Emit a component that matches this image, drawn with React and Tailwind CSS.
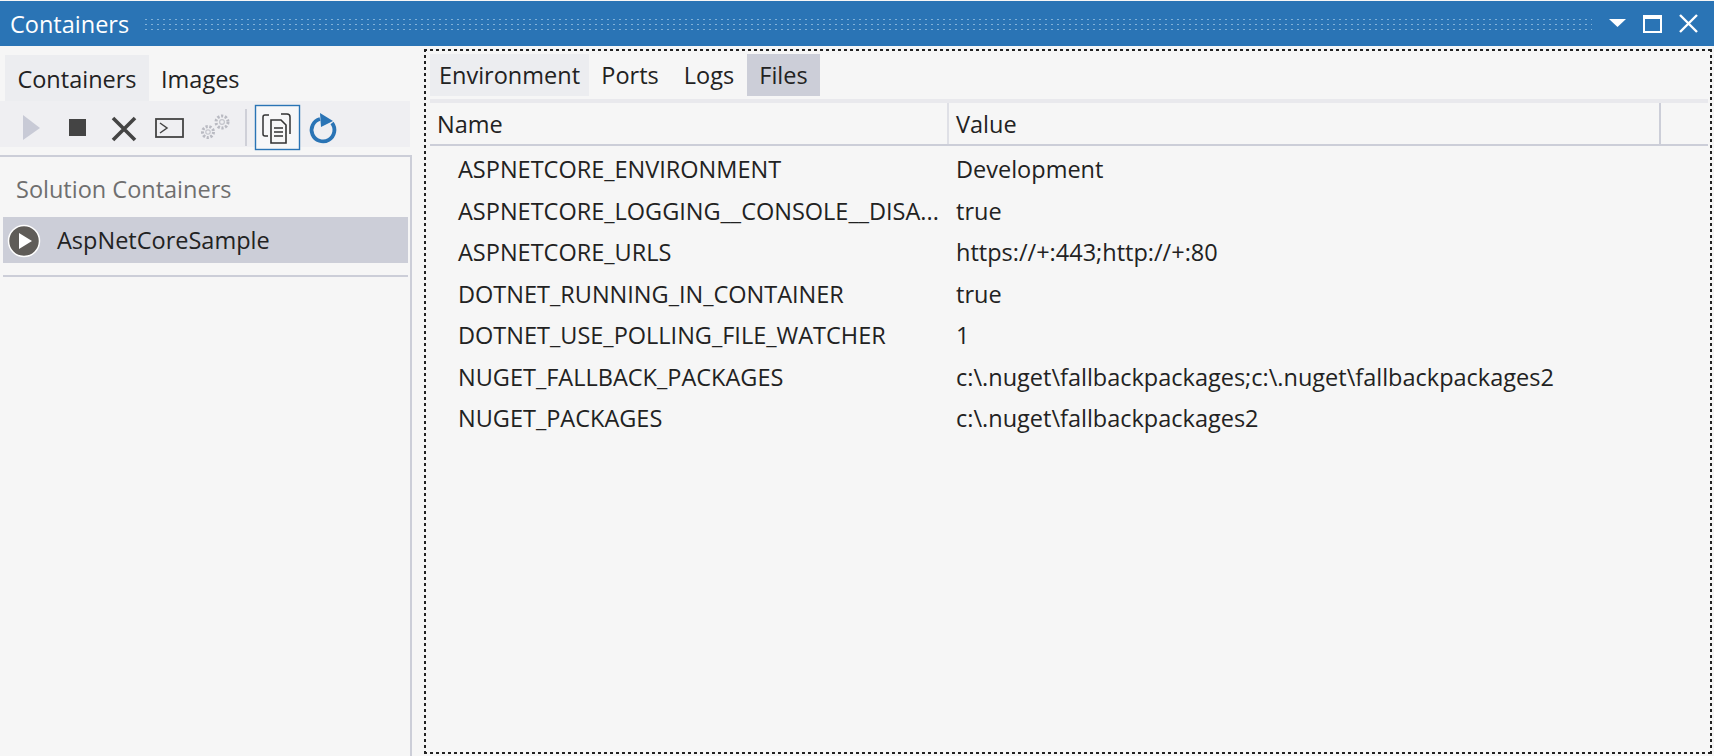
import React from 'react';

const envRows = [
  ['ASPNETCORE_ENVIRONMENT', 'Development'],
  ['ASPNETCORE_LOGGING__CONSOLE__DISA...', 'true'],
  ['ASPNETCORE_URLS', 'https://+:443;http://+:80'],
  ['DOTNET_RUNNING_IN_CONTAINER', 'true'],
  ['DOTNET_USE_POLLING_FILE_WATCHER', '1'],
  ['NUGET_FALLBACK_PACKAGES', 'c:\\.nuget\\fallbackpackages;c:\\.nuget\\fallbackpackages2'],
  ['NUGET_PACKAGES', 'c:\\.nuget\\fallbackpackages2'],
];

function Gear({ cx, cy, r }) {
  return (
    <g transform={`translate(${cx} ${cy})`}>
      <circle r={r} fill="none" stroke="#b9bac2" strokeWidth="3" strokeDasharray="2.2 1.6" />
      <circle r={r * 0.4} fill="none" stroke="#c4c5cc" strokeWidth="1.2" />
    </g>
  );
}

function Toolbar() {
  return (
    <div className="flex h-[46px] w-[410px] items-center bg-[#efeff2] pl-[2px]">
      <svg width="342" height="46" viewBox="0 0 342 46" className="shrink-0 overflow-visible">
        {/* play */}
        <path d="M21 14 L38 27 L21 39 Z" fill="#c8cad6" />
        {/* stop */}
        <rect x="67" y="18" width="17" height="17" fill="#444444" />
        {/* delete */}
        <path d="M111 17 L133 39 M133 17 L111 39" stroke="#444444" strokeWidth="3.6" fill="none" />
        {/* terminal */}
        <rect x="154" y="18" width="27" height="18" fill="none" stroke="#444444" strokeWidth="1.8" />
        <path d="M158 22 L165 27 L158 32" stroke="#444444" strokeWidth="1.5" fill="none" />
        {/* gears */}
        <Gear cx={206} cy={31} r={5.5} />
        <Gear cx={220} cy={21} r={6} />
        {/* separator */}
        <rect x="243" y="8" width="2" height="37" fill="#cfd0d8" />
        {/* copy files, selected */}
        <rect x="253.5" y="4.5" width="44" height="44" fill="#f7f7f8" stroke="#2a74b5" strokeWidth="1.4" />
        <path d="M267 14 H263 Q261 14 261 16 V33 Q261 35 263 35 H266" fill="none" stroke="#333333" strokeWidth="1.5" />
        <path d="M279 13 H285 Q288 13 288 16 V33" fill="none" stroke="#333333" strokeWidth="1.5" />
        <path d="M269 19 H279 L284 24 V42 H269 Z" fill="#f7f7f8" stroke="#333333" strokeWidth="1.6" />
        <path d="M272 27 H281 M272 31 H281 M272 35 H281" stroke="#333333" strokeWidth="1.4" />
        {/* refresh */}
        <path d="M330 22 A11.4 11.4 0 1 1 318 18" fill="none" stroke="#2a74b5" strokeWidth="3.8" />
        <path d="M318 12 L331 20 L319 26 Z" fill="#2a74b5" />
      </svg>
    </div>
  );
}

function LeftPane() {
  return (
    <div className="flex h-full w-[424px] shrink-0 flex-col">
      <div className="mt-[9px] flex h-[46px] pl-[5px] text-[23.5px] text-[#222]">
        <div className="flex w-[144px] items-center justify-center bg-[#ecedf0] pt-[4px]">Containers</div>
        <div className="flex items-center pl-[12px] pt-[4px]">Images</div>
      </div>
      <Toolbar />
      <div className="mt-[8px] flex-1 w-[412px] border-t-2 border-r-2 border-[#ccced8] pl-[3px] pr-[2px]">
        <div className="flex h-[60px] items-center pl-[13px] pt-[6px] text-[23.5px] text-[#6f6f6f]">Solution Containers</div>
        <div className="flex h-[46px] items-center bg-[#ccced8] pl-[4px] pt-[2px] text-[23.5px] text-[#222]">
          <svg width="34" height="34" viewBox="0 0 34 34" className="shrink-0">
            <circle cx="17" cy="17" r="15.5" fill="#5f5c58" stroke="#ffffff" strokeWidth="1.5" />
            <path d="M12 9 L25 17 L12 25 Z" fill="#ffffff" />
          </svg>
          <span className="ml-[16px]">AspNetCoreSample</span>
        </div>
        <div className="mt-[12px] h-[2px] bg-[#ccced8]" />
      </div>
    </div>
  );
}

function RightPane() {
  return (
    <div className="mt-[3px] mb-[2px] mr-[2px] flex-1 pl-[6px] pr-[4px] pt-[5px] [background:repeating-linear-gradient(90deg,#222_0_3px,transparent_3px_6px)_top/100%_2px_no-repeat,repeating-linear-gradient(90deg,#222_0_3px,transparent_3px_6px)_bottom/100%_2px_no-repeat,repeating-linear-gradient(0deg,#222_0_3px,transparent_3px_6px)_left/2px_100%_no-repeat,repeating-linear-gradient(0deg,#222_0_3px,transparent_3px_6px)_right/2px_100%_no-repeat]">
      <div className="flex h-[42px] text-[23.5px] text-[#222]">
        <div className="flex w-[159px] items-center justify-center bg-[#ecedf0] pt-[1px]">Environment</div>
        <div className="flex w-[82px] items-center justify-center pt-[1px]">Ports</div>
        <div className="flex w-[76px] items-center justify-center pt-[1px]">Logs</div>
        <div className="flex w-[73px] items-center justify-center bg-[#ccced8] pt-[1px]">Files</div>
      </div>
      <div className="mt-[3px] h-[4px] bg-[#e9e9ed]" />
      <div className="flex h-[43px] border-b-2 border-[#ccced8] text-[23.5px] text-[#222]">
        <div className="flex w-[519px] items-center border-r-2 border-[#dfe0e6] pl-[7px] pt-[2px]">Name</div>
        <div className="flex w-[712px] items-center border-r-2 border-[#ccced8] pl-[7px] pt-[2px]">Value</div>
      </div>
      <div className="pt-[3px] text-[23.5px] text-[#222]">
        {envRows.map(([name, value]) => (
          <div key={name} className="flex h-[41.5px] items-center whitespace-nowrap">
            <div className="w-[517px] shrink-0 pl-[28px]">{name}</div>
            <div className="pl-[9px]">{value}</div>
          </div>
        ))}
      </div>
    </div>
  );
}

export default function App() {
  return (
    <div className="flex h-[756px] w-[1714px] flex-col overflow-hidden bg-[#f6f6f6] font-['Open_Sans','Noto_Sans',sans-serif]">
      <div className="mt-[1px] flex h-[45px] shrink-0 items-center bg-[#2a74b5] pl-[10px] text-white">
        <span className="w-[117px] pt-[2px] text-[23.5px] whitespace-nowrap">Containers</span>
        <div className="ml-[16px] h-[14px] w-[1449px] bg-[radial-gradient(#7fb0d8_1px,transparent_1.2px)] bg-[length:6px_5px]" />
        <svg width="100" height="30" viewBox="0 0 100 30" className="ml-[13px] shrink-0">
          <path d="M4 10 H21 L12.5 18 Z" fill="#ffffff" />
          <rect x="39" y="7" width="17" height="16" fill="none" stroke="#ffffff" strokeWidth="2" />
          <rect x="38" y="6" width="19" height="4" fill="#ffffff" />
          <path d="M75 6 L92 23 M92 6 L75 23" stroke="#ffffff" strokeWidth="2.4" fill="none" />
        </svg>
      </div>
      <div className="flex min-h-0 flex-1">
        <LeftPane />
        <RightPane />
      </div>
    </div>
  );
}
